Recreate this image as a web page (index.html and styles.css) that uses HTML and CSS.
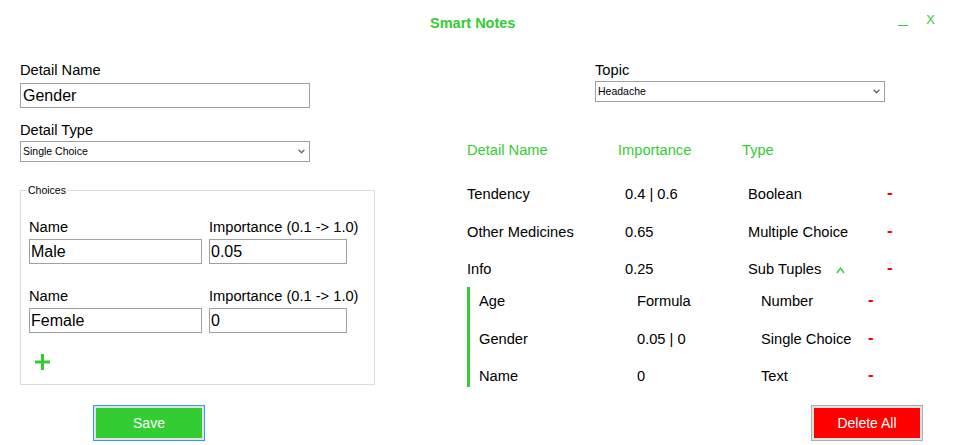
FILE: index.html
```html
<!DOCTYPE html>
<html lang="en">
<head>
<meta charset="utf-8">
<title>Smart Notes</title>
<link rel="stylesheet" href="styles.css">
</head>
<body>
<div class="window">
  <header class="titlebar">
    <h1 class="title">Smart Notes</h1>
    <div class="controls">
      <span class="minimize" aria-label="Minimize"></span>
      <span class="close">X</span>
    </div>
  </header>

  <main class="content">
    <section class="editor">
      <span class="label">Detail Name</span>
      <div class="textbox name-box">Gender</div>
      <span class="label type-label">Detail Type</span>
      <div class="combo">
        <span>Single Choice</span>
        <svg class="chev" width="7" height="5" viewBox="0 0 7 5"><polyline points="0.6,0.8 3.5,3.8 6.4,0.8" fill="none" stroke="#6b6b6b" stroke-width="1.4"/></svg>
      </div>

      <fieldset class="choices">
        <legend>Choices</legend>
        <div class="choices-body">
          <div class="choice">
            <div class="field name-field"><span class="label">Name</span><div class="textbox">Male</div></div>
            <div class="field imp-field"><span class="label">Importance (0.1 -&gt; 1.0)</span><div class="textbox">0.05</div></div>
          </div>
          <div class="choice">
            <div class="field name-field"><span class="label">Name</span><div class="textbox">Female</div></div>
            <div class="field imp-field"><span class="label">Importance (0.1 -&gt; 1.0)</span><div class="textbox">0</div></div>
          </div>
          <button class="add" aria-label="Add choice">
            <svg width="17" height="18" viewBox="0 0 17 18"><path d="M8.5 1V17M1 9H16" stroke="#32cd32" stroke-width="3" fill="none"/></svg>
          </button>
        </div>
      </fieldset>
    </section>

    <section class="overview">
      <div class="topic">
        <span class="label">Topic</span>
        <div class="combo">
          <span>Headache</span>
          <svg class="chev" width="7" height="5" viewBox="0 0 7 5"><polyline points="0.6,0.8 3.5,3.8 6.4,0.8" fill="none" stroke="#6b6b6b" stroke-width="1.4"/></svg>
        </div>
      </div>

      <div class="thead">
        <span class="h-name">Detail Name</span>
        <span class="h-imp">Importance</span>
        <span class="h-type">Type</span>
      </div>

      <div class="rows">
        <div class="row"><span class="c-name">Tendency</span><span class="c-imp">0.4 | 0.6</span><span class="c-type">Boolean</span><span class="remove">-</span></div>
        <div class="row"><span class="c-name">Other Medicines</span><span class="c-imp">0.65</span><span class="c-type">Multiple Choice</span><span class="remove">-</span></div>
        <div class="row"><span class="c-name">Info</span><span class="c-imp">0.25</span><span class="c-type">Sub Tuples<svg class="caret" width="9" height="7" viewBox="0 0 9 7"><polyline points="1,6 4.5,1.2 8,6" fill="none" stroke="#32cd32" stroke-width="1.4"/></svg></span><span class="remove">-</span></div>
      </div>

      <div class="subrows">
        <div class="row"><span class="s-name">Age</span><span class="s-imp">Formula</span><span class="s-type">Number</span><span class="remove">-</span></div>
        <div class="row"><span class="s-name">Gender</span><span class="s-imp">0.05 | 0</span><span class="s-type">Single Choice</span><span class="remove">-</span></div>
        <div class="row"><span class="s-name">Name</span><span class="s-imp">0</span><span class="s-type">Text</span><span class="remove">-</span></div>
      </div>
    </section>
  </main>

  <footer class="actions">
    <button class="btn save">Save</button>
    <button class="btn delete">Delete All</button>
  </footer>
</div>
</body>
</html>
```

FILE: styles.css
```css
* {
  box-sizing: border-box;
  margin: 0;
  padding: 0;
}

html, body {
  width: 964px;
  height: 445px;
  overflow: hidden;
  background: #ffffff;
}

body {
  font-family: "Liberation Sans", Arial, sans-serif;
  font-size: 14.67px;
  line-height: 17px;
  color: #000000;
}

.window {
  display: flex;
  flex-direction: column;
  width: 964px;
  height: 445px;
}

/* Title bar */
.titlebar {
  display: flex;
  align-items: flex-start;
  height: 62px;
}

.title {
  margin: 15px 0 0 430px;
  font-size: 14.5px;
  line-height: 17px;
  font-weight: bold;
  color: #32cd32;
}

.controls {
  display: flex;
  align-items: flex-start;
  margin-left: auto;
  margin-right: 29px;
}

.minimize {
  display: block;
  width: 10px;
  height: 1px;
  margin-top: 25px;
  background: #32cd32;
}

.close {
  margin-left: 18.5px;
  margin-top: 12px;
  font-size: 13px;
  line-height: 15px;
  color: #32cd32;
}

/* Main area */
.content {
  display: flex;
  height: 343px;
}

.editor {
  width: 375px;
  padding-left: 20px;
  display: flex;
  flex-direction: column;
  align-items: flex-start;
}

.label {
  display: block;
  white-space: nowrap;
}

.textbox {
  height: 25px;
  border: 1px solid #a0a0a0;
  font-size: 16px;
  line-height: 23px;
  padding-left: 1px;
  white-space: nowrap;
}

.name-box {
  width: 290px;
  margin-top: 4px;
  padding-left: 2px;
}

.type-label {
  margin-top: 14px;
}

.combo {
  width: 290px;
  height: 21px;
  margin-top: 2px;
  border: 1px solid #a0a0a0;
  display: flex;
  align-items: center;
  justify-content: space-between;
  padding: 0 4px 0 2px;
  font-size: 10.5px;
  line-height: 19px;
}

.chev {
  display: block;
}

/* Choices group */
.choices {
  margin-top: 23px;
  width: 355px;
  border: 1px solid #dcdcdc;
  padding: 0;
}

.choices legend {
  margin-left: 6px;
  padding: 0 1px;
  font-size: 10.5px;
  line-height: 11px;
}

.choices-body {
  padding: 23px 0 13px 8px;
}

.choice {
  display: flex;
  gap: 7px;
}

.choice + .choice {
  margin-top: 24px;
}

.field .textbox {
  margin-top: 3px;
}

.name-field .textbox {
  width: 173px;
}

.imp-field .textbox {
  width: 138px;
}

.add {
  display: block;
  width: 17px;
  height: 18px;
  margin: 20px 0 0 5px;
  border: 0;
  background: none;
}

.add svg {
  display: block;
}

/* Overview */
.overview {
  margin-left: 92px;
  flex: 1;
}

.topic {
  margin-left: 128px;
}

.thead {
  display: flex;
  margin-top: 40px;
  color: #32cd32;
  white-space: nowrap;
}

.h-name { width: 151px; }
.h-imp { width: 124px; }

.rows {
  margin-top: 27px;
  display: flex;
  flex-direction: column;
  gap: 20.5px;
}

.row {
  display: flex;
  height: 17px;
  white-space: nowrap;
}

.c-name { width: 158px; }
.c-imp { width: 123px; }
.c-type { width: 139px; }

.caret {
  display: inline-block;
  vertical-align: top;
  margin: 6px 0 0 15px;
}

.remove {
  color: #ff0000;
  font-weight: bold;
  font-size: 17px;
  line-height: 13px;
}

.subrows {
  margin-top: 9px;
  border-left: 3px solid #32cd32;
  padding: 6px 0 2px 9px;
  display: flex;
  flex-direction: column;
  gap: 20.5px;
}

.s-name { width: 158px; }
.s-imp { width: 124px; }
.s-type { width: 107px; }

/* Footer buttons */
.actions {
  display: flex;
  justify-content: space-between;
  padding: 0 41px 0 93px;
}

.btn {
  width: 112px;
  height: 36px;
  font-family: "Liberation Sans", Arial, sans-serif;
  font-size: 14px;
  color: #ffffff;
  box-shadow: inset 0 0 0 2px #e3e3e3;
}

.save {
  background: #32cd32;
  border: 1px solid #3399ff;
}

.delete {
  background: #ff0000;
  border: 1px solid #adadad;
}
```
